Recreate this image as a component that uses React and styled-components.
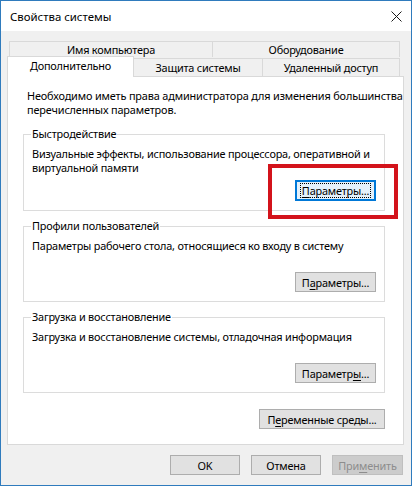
import React from "react";
import styled, { createGlobalStyle, css } from "styled-components";

const FONT = `"Noto Sans", "Open Sans", sans-serif`;
const SIZE = "10.9px";
const TRACK = "-0.2px";

const GlobalStyle = createGlobalStyle`
    html, body {
        margin: 0;
        padding: 0;
        background: #ffffff;
    }
    * {
        box-sizing: border-box;
    }
`;

const groups = [
    {
        title: "Быстродействие",
        lines: ["Визуальные эффекты, использование процессора, оперативной и", "виртуальной памяти"],
        before: "",
        key: "П",
        rest: "араметры...",
        focused: true,
    },
    {
        title: "Профили пользователей",
        lines: ["Параметры рабочего стола, относящиеся ко входу в систему"],
        before: "П",
        key: "а",
        rest: "раметры...",
    },
    {
        title: "Загрузка и восстановление",
        lines: ["Загрузка и восстановление системы, отладочная информация"],
        before: "Параметр",
        key: "ы",
        rest: "...",
    },
];

const App = () => {
    return (
        <>
            <GlobalStyle />
            <Window>
                <TitleBar>
                    <Title>Свойства системы</Title>
                    <CloseIcon width="11" height="11" viewBox="0 0 11 11">
                        <path d="M0.5 0.5 L10.5 10.5 M10.5 0.5 L0.5 10.5" stroke="#1a1a1a" strokeWidth="1" fill="none" />
                    </CloseIcon>
                </TitleBar>

                <Body>
                    <TabRowTop>
                        <Tab $w={204}>Имя компьютера</Tab>
                        <Tab $w={187} $joined>Оборудование</Tab>
                    </TabRowTop>
                    <TabRowBottom>
                        <ActiveTab>Дополнительно</ActiveTab>
                        <Tab $w={129} $joined $low>Защита системы</Tab>
                        <Tab $w={137} $joined $low>Удаленный доступ</Tab>
                    </TabRowBottom>

                    <Panel>
                        <Intro>
                            <Line>Необходимо иметь права администратора для изменения большинства</Line>
                            <Line>перечисленных параметров.</Line>
                        </Intro>

                        {groups.map((g) => (
                            <Group key={g.title}>
                                <GroupLabel>{g.title}</GroupLabel>
                                <GroupText>
                                    {g.lines.map((l) => (
                                        <Line key={l}>{l}</Line>
                                    ))}
                                </GroupText>
                                <ButtonSlot>
                                    <Button $w={81} $focused={g.focused}>
                                        <FocusRing $on={g.focused}>
                                            {g.before}<u>{g.key}</u>{g.rest}
                                        </FocusRing>
                                    </Button>
                                    {g.focused && <RedMark />}
                                </ButtonSlot>
                            </Group>
                        ))}

                        <EnvButton $w={126}>
                            П<u>е</u>ременные среды...
                        </EnvButton>
                    </Panel>

                    <Footer>
                        <Button $w={70}>OK</Button>
                        <Button $w={70}>Отмена</Button>
                        <Button $w={71} disabled>
                            При<u>м</u>енить
                        </Button>
                    </Footer>
                </Body>
            </Window>
        </>
    );
};

const Window = styled.div`
    width: 412px;
    height: 486px;
    display: flex;
    flex-direction: column;
    border: 1px solid #2f7bbd;
    background: #f0f0f0;
    font-family: ${FONT};
    font-size: ${SIZE};
    letter-spacing: ${TRACK};
    color: #000;
    overflow: hidden;
`;

const TitleBar = styled.div`
    height: 30px;
    flex: 0 0 30px;
    display: flex;
    align-items: center;
    justify-content: space-between;
    padding: 0 9px 0 9px;
    background: #ffffff;
`;

const Title = styled.span`
    font-size: 11.4px;
    letter-spacing: 0;
    color: #000;
`;

const CloseIcon = styled.svg`
    display: block;
    margin-top: 1px;
`;

const Body = styled.div`
    flex: 1;
    display: flex;
    flex-direction: column;
    padding: 10px 7px 0 6px;
`;

const TabRowTop = styled.div`
    display: flex;
    height: 16px;
    margin-left: 2px;
`;

const TabRowBottom = styled.div`
    display: flex;
    align-items: flex-end;
    height: 19px;
`;

const Tab = styled.div`
    width: ${(p) => p.$w}px;
    height: ${(p) => (p.$low ? 18 : 16)}px;
    display: flex;
    align-items: center;
    justify-content: center;
    background: #f0f0f0;
    border: 1px solid #d9d9d9;
    border-bottom: none;
    ${(p) =>
        p.$joined &&
        css`
            border-left: none;
        `}
    line-height: 14px;
    white-space: nowrap;
`;

const ActiveTab = styled.div`
    position: relative;
    z-index: 2;
    width: 127px;
    height: 21px;
    margin-bottom: -1px;
    display: flex;
    align-items: center;
    justify-content: center;
    padding-bottom: 2px;
    background: #ffffff;
    border: 1px solid #d9d9d9;
    border-bottom: none;
    line-height: 14px;
`;

const Panel = styled.div`
    display: flex;
    flex-direction: column;
    background: #ffffff;
    border: 1px solid #d9d9d9;
    padding: 12px 18px 15px 15px;
`;

const Line = styled.span`
    display: block;
    white-space: nowrap;
`;

const Intro = styled.div`
    margin: 0 0 10px 4px;
    line-height: 14px;
    letter-spacing: -0.15px;
`;

const Group = styled.fieldset`
    display: flex;
    flex-direction: column;
    margin: 0 0 8px 0;
    padding: 0 8px 9px 8px;
    border: 1px solid #dcdcdc;
    min-width: 0;
`;

const GroupLabel = styled.legend`
    padding: 0 1px;
    margin-left: -1px;
    line-height: 14px;
`;

const GroupText = styled.div`
    margin-top: 6px;
    min-height: 28px;
    line-height: 14px;
`;

const ButtonSlot = styled.div`
    position: relative;
    align-self: flex-end;
    margin-top: 5px;
    display: flex;
`;

const Button = styled.button`
    width: ${(p) => p.$w}px;
    height: ${(p) => (p.$focused ? 21 : 20)}px;
    display: flex;
    align-items: center;
    justify-content: center;
    padding: 0;
    font-family: ${FONT};
    font-size: ${SIZE};
    letter-spacing: ${TRACK};
    color: #000;
    background: #e1e1e1;
    border: 1px solid #adadad;
    white-space: nowrap;

    u {
        text-underline-offset: 2px;
    }

    ${(p) =>
        p.$focused &&
        css`
            background: #e5f1fb;
            border: 1px solid #0078d7;
            box-shadow: inset 0 0 0 1px #0078d7;
        `}

    &:disabled {
        background: #cccccc;
        border-color: #bfbfbf;
        color: #8d8d8d;
    }
`;

const FocusRing = styled.span`
    padding: 0 1px;
    line-height: 13px;
    ${(p) =>
        p.$on &&
        css`
            outline: 1px dotted #000;
        `}
`;

const RedMark = styled.div`
    position: absolute;
    top: -16px;
    left: -27px;
    right: -22px;
    bottom: -18px;
    border: 4px solid #d3131b;
    pointer-events: none;
`;

const EnvButton = styled(Button)`
    align-self: flex-end;
    margin-top: 8px;
`;

const Footer = styled.div`
    display: flex;
    justify-content: flex-end;
    gap: 11px;
    margin-top: 10px;
    padding-right: 1px;
`;

export default App;
